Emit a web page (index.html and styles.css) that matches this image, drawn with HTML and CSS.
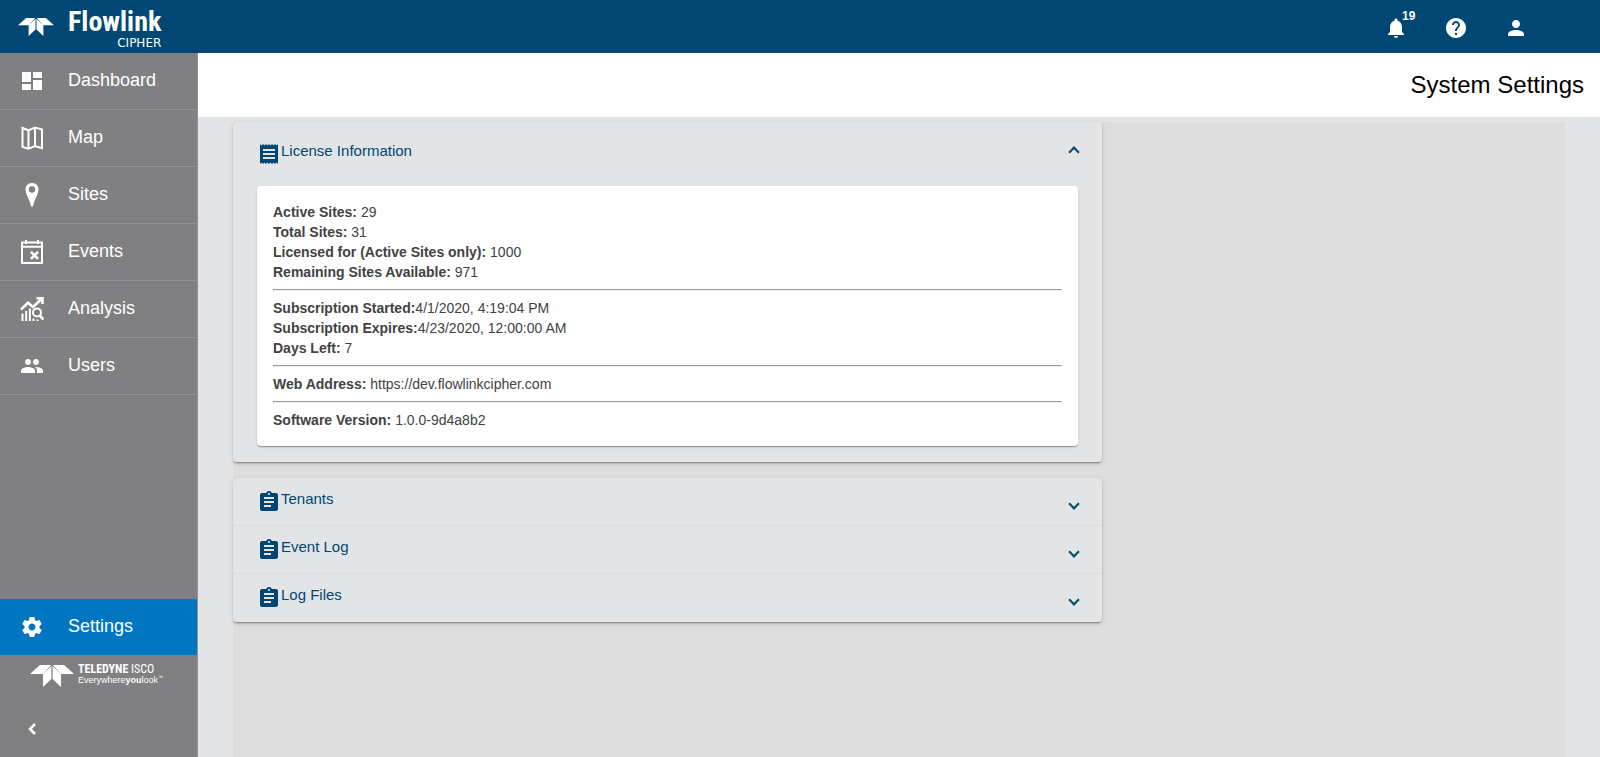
FILE: index.html
```html
<!DOCTYPE html>
<html lang="en">
<head>
    <meta charset="UTF-8">
    <meta name="viewport" content="width=device-width, initial-scale=1.0">
    <title>Flowlink Cipher - System Settings</title>
    <link rel="stylesheet" href="styles.css">
</head>
<body>
    <header class="topbar">
        <a href="#" class="brand">
            <svg class="brand-mark" width="36" height="18" viewBox="0 0 44 22" aria-hidden="true">
                <path d="M10 0H21L13 9H0zM23 0H34L44 9H31zM21.400 1V14L13 22V9zM22.600 1V14L31 22V9z"/>
            </svg>
            <span class="brand-text">
                <span class="brand-name">Flowlink</span>
                <span class="brand-sub">CIPHER</span>
            </span>
        </a>
        <div class="topbar-actions">
            <button class="icon-button" aria-label="Notifications">
                <svg width="24" height="24" viewBox="0 0 24 24"><path d="M12 22c1.100 0 2-.9 2-2h-4c0 1.100.89 2 2 2zm6-6v-5c0-3.070-1.640-5.640-4.500-6.320V4c0-.83-.67-1.500-1.500-1.500s-1.500.67-1.500 1.500v.68C7.630 5.360 6 7.920 6 11v5l-2 2v1h16v-1l-2-2z"/></svg>
                <span class="badge">19</span>
            </button>
            <button class="icon-button" aria-label="Help">
                <svg width="24" height="24" viewBox="0 0 24 24"><path d="M12 2C6.480 2 2 6.480 2 12s4.480 10 10 10 10-4.480 10-10S17.520 2 12 2zm1 17h-2v-2h2v2zm2.070-7.750l-.9.920C13.450 12.900 13 13.500 13 15h-2v-.5c0-1.100.45-2.100 1.170-2.830l1.240-1.260c.37-.36.59-.86.59-1.410 0-1.100-.9-2-2-2s-2 .9-2 2H8c0-2.210 1.790-4 4-4s4 1.790 4 4c0 .88-.36 1.680-.93 2.250z"/></svg>
            </button>
            <button class="icon-button" aria-label="Account">
                <svg width="24" height="24" viewBox="0 0 24 24"><path d="M12 12c2.210 0 4-1.790 4-4s-1.790-4-4-4-4 1.790-4 4 1.790 4 4 4zm0 2c-2.670 0-8 1.340-8 4v2h16v-2c0-2.660-5.330-4-8-4z"/></svg>
            </button>
        </div>
    </header>

    <div class="layout">
        <aside class="sidebar">
            <nav class="nav">
                <a href="#" class="nav-item">
                    <svg width="24" height="24" viewBox="0 0 24 24"><path d="M2 3h9v10H2zM2 15h9v6H2zM13 11h9v10h-9zM13 3h9v6h-9z"/></svg>
                    <span>Dashboard</span>
                </a>
                <a href="#" class="nav-item">
                    <svg class="outline" width="24" height="24" viewBox="0 0 24 24"><path d="M2.500 2L8.500 4.300L15 1.500L22 3.500V22.200L15 20L8.500 22.800L2.500 21zM8.500 4.300V22.800M15 1.500V20"/></svg>
                    <span>Map</span>
                </a>
                <a href="#" class="nav-item">
                    <svg width="24" height="24" viewBox="0 0 24 24"><path fill-rule="evenodd" d="M12 0C8.100 0 5.500 2.800 5.500 6.500C5.500 11 9.500 16 11 23.500H13C14.500 16 18.500 11 18.500 6.500C18.500 2.800 15.900 0 12 0zM12 3.300A3.200 3.200 0 1 1 12 9.700A3.200 3.200 0 1 1 12 3.300z"/></svg>
                    <span>Sites</span>
                </a>
                <a href="#" class="nav-item">
                    <svg class="outline" width="24" height="24" viewBox="0 0 24 24"><path d="M2 2.500H22V23H2zM2 6.800H22M6 0V4M18 0V4"/><path class="thick" d="M11 11.800L18 18.800M18 11.800L11 18.800"/></svg>
                    <span>Events</span>
                </a>
                <a href="#" class="nav-item">
                    <svg class="outline" width="24" height="24" viewBox="0 0 24 24"><path class="thick" d="M1 12.500L8 5.800L13 10L21.500 2M16.500 1.200H22.500V7"/><path d="M2.500 24V16.500M6.200 24V14M9.900 24V11.500M13.500 24V21.500M17.500 24V22.500"/><circle cx="17" cy="15.500" r="4"/><path class="thick" d="M19.800 18.500L23.500 22.500"/></svg>
                    <span>Analysis</span>
                </a>
                <a href="#" class="nav-item">
                    <svg width="24" height="24" viewBox="0 0 24 24"><path d="M16 11c1.660 0 2.990-1.340 2.990-3S17.660 5 16 5c-1.660 0-3 1.340-3 3s1.340 3 3 3zm-8 0c1.660 0 2.990-1.340 2.990-3S9.660 5 8 5C6.340 5 5 6.340 5 8s1.340 3 3 3zm0 2c-2.330 0-7 1.170-7 3.500V19h14v-2.500c0-2.330-4.670-3.500-7-3.500zm8 0c-.29 0-.62.020-.97.050 1.160.84 1.970 1.970 1.970 3.450V19h6v-2.500c0-2.330-4.670-3.500-7-3.500z"/></svg>
                    <span>Users</span>
                </a>
            </nav>
            <div class="sidebar-footer">
                <a href="#" class="nav-item active" aria-current="page">
                    <svg width="24" height="24" viewBox="0 0 24 24"><path d="M19.430 12.980c.04-.32.070-.64.070-.98s-.030-.66-.070-.98l2.110-1.650c.19-.15.24-.42.120-.64l-2-3.460c-.12-.22-.39-.3-.61-.22l-2.490 1c-.52-.4-1.080-.73-1.690-.98l-.38-2.650C14.460 2.180 14.250 2 14 2h-4c-.25 0-.46.18-.49.42l-.38 2.650c-.61.250-1.170.59-1.690.98l-2.490-1c-.23-.09-.49 0-.61.220l-2 3.460c-.13.220-.07.49.120.64l2.110 1.650c-.04.32-.07.65-.07.98s.030.66.070.98l-2.110 1.650c-.19.150-.24.420-.12.640l2 3.460c.12.220.39.300.61.220l2.490-1c.52.400 1.080.73 1.690.98l.38 2.650c.030.240.240.420.49.420h4c.25 0 .46-.18.49-.42l.38-2.650c.61-.25 1.170-.59 1.690-.98l2.490 1c.23.090.49 0 .61-.22l2-3.460c.12-.22.070-.49-.12-.64l-2.110-1.650zM12 15.500c-1.930 0-3.500-1.570-3.500-3.500s1.570-3.500 3.500-3.500 3.500 1.570 3.500 3.500-1.570 3.500-3.500 3.500z"/></svg>
                    <span>Settings</span>
                </a>
                <div class="company">
                    <svg width="44" height="22" viewBox="0 0 44 22" aria-hidden="true">
                        <path d="M10 0H21L13 9H0zM23 0H34L44 9H31zM21.400 1V14L13 22V9zM22.600 1V14L31 22V9z"/>
                    </svg>
                    <div class="company-text">
                        <div class="company-name"><b>TELEDYNE</b> ISCO</div>
                        <div class="company-tag">Everywhere<b>you</b>look<sup>&trade;</sup></div>
                    </div>
                </div>
                <button class="collapse" aria-label="Collapse menu">
                    <svg class="outline" width="24" height="24" viewBox="0 0 24 24"><path class="thick" d="M15 7L10 12L15 17"/></svg>
                </button>
            </div>
        </aside>

        <main class="main">
            <div class="page-title">
                <h1>System Settings</h1>
            </div>
            <div class="content">
                <div class="panels">
                    <section class="panel open">
                        <button class="panel-header" aria-expanded="true">
                            <svg width="24" height="24" viewBox="0 0 24 24"><path d="M18 17H6v-2h12v2zm0-4H6v-2h12v2zm0-4H6V7h12v2zM3 22l1.500-1.500L6 22l1.500-1.500L9 22l1.500-1.500L12 22l1.500-1.500L15 22l1.500-1.500L18 22l1.500-1.500L21 22V2l-1.500 1.500L18 2l-1.500 1.500L15 2l-1.500 1.500L12 2l-1.500 1.500L9 2 7.500 3.500 6 2 4.500 3.500 3 2v20z"/></svg>
                            <span class="panel-title">License Information</span>
                            <span class="chevron"></span>
                        </button>
                        <div class="panel-body">
                            <div class="card">
                                <div><b>Active Sites:</b> 29</div>
                                <div><b>Total Sites:</b> 31</div>
                                <div><b>Licensed for (Active Sites only):</b> 1000</div>
                                <div><b>Remaining Sites Available:</b> 971</div>
                                <hr>
                                <div><b>Subscription Started:</b>4/1/2020, 4:19:04 PM</div>
                                <div><b>Subscription Expires:</b>4/23/2020, 12:00:00 AM</div>
                                <div><b>Days Left:</b> 7</div>
                                <hr>
                                <div><b>Web Address:</b> https://dev.flowlinkcipher.com</div>
                                <hr>
                                <div><b>Software Version:</b> 1.0.0-9d4a8b2</div>
                            </div>
                        </div>
                    </section>

                    <section class="panel">
                        <button class="panel-header" aria-expanded="false">
                            <svg width="24" height="24" viewBox="0 0 24 24"><path d="M19 3h-4.180C14.400 1.840 13.300 1 12 1c-1.300 0-2.400.84-2.820 2H5c-1.100 0-2 .9-2 2v14c0 1.100.9 2 2 2h14c1.100 0 2-.9 2-2V5c0-1.100-.9-2-2-2zm-7 0c.55 0 1 .45 1 1s-.45 1-1 1-1-.45-1-1 .45-1 1-1zm2 14H7v-2h7v2zm3-4H7v-2h10v2zm0-4H7V7h10v2z"/></svg>
                            <span class="panel-title">Tenants</span>
                            <span class="chevron"></span>
                        </button>
                        <button class="panel-header" aria-expanded="false">
                            <svg width="24" height="24" viewBox="0 0 24 24"><path d="M19 3h-4.180C14.400 1.840 13.300 1 12 1c-1.300 0-2.400.84-2.820 2H5c-1.100 0-2 .9-2 2v14c0 1.100.9 2 2 2h14c1.100 0 2-.9 2-2V5c0-1.100-.9-2-2-2zm-7 0c.55 0 1 .45 1 1s-.45 1-1 1-1-.45-1-1 .45-1 1-1zm2 14H7v-2h7v2zm3-4H7v-2h10v2zm0-4H7V7h10v2z"/></svg>
                            <span class="panel-title">Event Log</span>
                            <span class="chevron"></span>
                        </button>
                        <button class="panel-header" aria-expanded="false">
                            <svg width="24" height="24" viewBox="0 0 24 24"><path d="M19 3h-4.180C14.400 1.840 13.300 1 12 1c-1.300 0-2.400.84-2.820 2H5c-1.100 0-2 .9-2 2v14c0 1.100.9 2 2 2h14c1.100 0 2-.9 2-2V5c0-1.100-.9-2-2-2zm-7 0c.55 0 1 .45 1 1s-.45 1-1 1-1-.45-1-1 .45-1 1-1zm2 14H7v-2h7v2zm3-4H7v-2h10v2zm0-4H7V7h10v2z"/></svg>
                            <span class="panel-title">Log Files</span>
                            <span class="chevron"></span>
                        </button>
                    </section>
                </div>
            </div>
        </main>
    </div>
</body>
</html>
```
FILE: styles.css
```css
* {
    box-sizing: border-box;
}
body {
    margin: 0;
    min-height: 100vh;
    display: flex;
    flex-direction: column;
    font-family: "Liberation Sans", Arial, sans-serif;
    font-size: 14px;
    line-height: 20px;
    color: #424242;
    background-color: #e3e4e6;
}
a {
    color: inherit;
    text-decoration: none;
}
button {
    font: inherit;
    color: inherit;
    padding: 0;
    border: none;
    background: none;
    cursor: pointer;
}
svg {
    display: block;
    flex: none;
    fill: currentColor;
}
.outline {
    fill: none;
    stroke: currentColor;
    stroke-width: 2;
}
.thick {
    stroke-width: 2.6;
}

/* top bar */
.topbar {
    height: 53px;
    display: flex;
    justify-content: space-between;
    align-items: center;
    padding: 0 72px 0 18px;
    background-color: #004873;
    color: #fff;
}
.brand {
    display: flex;
    align-items: center;
    gap: 14px;
}
.brand-text {
    display: flex;
    flex-direction: column;
}
.brand-name {
    font-family: "Roboto Condensed", "Open Sans Condensed", "Liberation Sans", sans-serif;
    font-size: 28px;
    line-height: 32px;
    font-weight: bold;
}
.brand-sub {
    font-family: "DejaVu Sans", sans-serif;
    font-size: 12px;
    line-height: 10px;
    text-align: right;
}
.topbar-actions {
    display: flex;
    gap: 36px;
    padding-top: 3px;
}
.icon-button {
    position: relative;
}
.badge {
    position: absolute;
    left: 18px;
    top: -8px;
    font-size: 12px;
    line-height: 16px;
    font-weight: bold;
}

/* side menu */
.layout {
    flex: 1;
    display: flex;
}
.sidebar {
    width: 198px;
    flex: none;
    display: flex;
    flex-direction: column;
    justify-content: space-between;
    background-color: #808082;
    border-right: 1px solid #929395;
    color: #fff;
}
.nav-item {
    height: 57px;
    display: flex;
    align-items: center;
    gap: 24px;
    padding-left: 20px;
    border-bottom: 1px solid #929395;
    font-size: 18px;
}
.nav-item span {
    padding-bottom: 2px;
}
.nav-item.active {
    height: 56px;
    border-bottom: none;
    background-color: #0076c0;
}
.company {
    display: flex;
    gap: 4px;
    padding: 8px 0 0 30px;
}
.company svg {
    margin-top: 2px;
}
.company-name {
    font-family: "Roboto Condensed", "Open Sans Condensed", "Liberation Sans", sans-serif;
    font-size: 12px;
    line-height: 12px;
}
.company-tag {
    font-size: 9px;
    line-height: 10px;
}
.company-tag sup {
    font-size: 5px;
    line-height: 5px;
}
.collapse {
    display: block;
    margin: 30px 0 16px 20px;
}

/* page */
.main {
    flex: 1;
    display: flex;
    flex-direction: column;
}
.page-title {
    height: 64px;
    display: flex;
    justify-content: flex-end;
    align-items: center;
    padding: 0 16px;
    background-color: #fff;
    color: #000;
}
.page-title h1 {
    margin: 0;
    font-size: 24px;
    line-height: 32px;
    font-weight: normal;
}
.content {
    flex: 1;
    display: grid;
    grid-template-columns: 2fr 1fr;
    gap: 28px;
    margin: 5px 35px 0;
    background-color: #ddd;
}
.panel {
    margin-bottom: 16px;
    border-radius: 4px;
    background-color: #e3e4e6;
    box-shadow: 0 3px 1px -2px rgba(0, 0, 0, 0.2), 0 2px 2px 0 rgba(0, 0, 0, 0.14), 0 1px 5px 0 rgba(0, 0, 0, 0.12);
}
.panel-header {
    width: 100%;
    height: 48px;
    display: flex;
    align-items: center;
    padding: 0 24px;
    color: #004873;
    font-size: 15px;
    text-align: left;
}
.panel-header + .panel-header {
    box-shadow: 0 -1px 0 #dbdcde;
}
.open .panel-header {
    height: 64px;
}
.panel-title {
    flex: 1;
    padding-bottom: 6px;
}
.chevron {
    width: 8px;
    height: 8px;
    margin-top: 4px;
    border: solid #004873;
    border-width: 0 2px 2px 0;
    transform: rotate(45deg);
}
.open .chevron {
    margin: 0 0 4px;
    transform: rotate(225deg);
}
.panel-body {
    padding: 0 24px 16px;
}
.card {
    padding: 16px;
    border-radius: 4px;
    background-color: #fff;
    box-shadow: 0 2px 1px -1px rgba(0, 0, 0, 0.2), 0 1px 1px 0 rgba(0, 0, 0, 0.14), 0 1px 3px 0 rgba(0, 0, 0, 0.12);
}
.card hr {
    margin: 7px 0;
    border: 1px inset #eee;
}
```
